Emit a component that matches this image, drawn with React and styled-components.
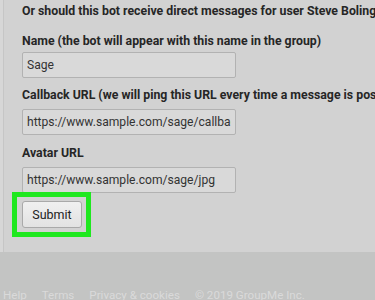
import React from 'react';
import styled, { createGlobalStyle } from 'styled-components';

const GlobalStyle = createGlobalStyle`
  html, body {
    margin: 0;
    padding: 0;
    background: #c3c4c3;
    overflow: hidden;
  }
  body {
    font-family: Roboto, "Liberation Sans", Arial, sans-serif;
  }
`;

const Panel = styled.div`
  background: #d2d2d2;
  border-left: 3px solid #d7d7d7;
  box-shadow: inset 1px 0 0 #c6c6c6;
  padding: 2.5px 0 17px 19px;
  height: 252px;
  box-sizing: border-box;
  overflow: hidden;
`;

const Label = styled.div`
  font-size: 12.3px;
  line-height: 16px;
  font-weight: 700;
  color: #262626;
  white-space: nowrap;
  margin-top: ${p => p.$top || 0}px;
  margin-bottom: ${p => p.$bottom || 6}px;
`;

const TextInput = styled.input`
  display: block;
  box-sizing: border-box;
  width: 214px;
  height: 26px;
  margin: 0;
  padding: 0 4px;
  border: 1px solid #b2b2b2;
  border-radius: 2px;
  background: #d9d9d9;
  font-family: inherit;
  font-size: 12.1px;
  color: #333;
  outline: none;
`;

const Highlight = styled.div`
  display: inline-block;
  margin: -1px 0 0 -10px;
  border: 5px solid #1fe81f;
  padding: 4px 4px 4px 5px;
`;

const SubmitButton = styled.button`
  display: block;
  box-sizing: border-box;
  width: 60px;
  height: 27px;
  margin: 0;
  padding: 0;
  border: 1px solid #a9a9a9;
  border-radius: 3px;
  background: linear-gradient(#f0f0f0, #e2e2e2);
  font-family: inherit;
  font-size: 12.5px;
  color: #222;
`;

const Footer = styled.div`
  display: flex;
  gap: 15px;
  padding: 36px 0 0 3px;
  font-size: 11.6px;
  color: #dadada;
  white-space: nowrap;
`;

const fields = [
  { label: 'Name (the bot will appear with this name in the group)', value: 'Sage', top: 14, bottom: 3.5 },
  { label: 'Callback URL (we will ping this URL every time a message is posted)', value: 'https://www.sample.com/sage/callback', top: 8.5, bottom: 6.5 },
  { label: 'Avatar URL', value: 'https://www.sample.com/sage/jpg', top: 9.5, bottom: 6.5 },
];

export default function App() {
  return (
    <>
      <GlobalStyle />
      <Panel>
        <Label $bottom={0}>Or should this bot receive direct messages for user Steve Bolinger?</Label>
        {fields.map(f => (
          <React.Fragment key={f.label}>
            <Label $top={f.top} $bottom={f.bottom}>{f.label}</Label>
            <TextInput defaultValue={f.value} />
          </React.Fragment>
        ))}
        <Highlight>
          <SubmitButton>Submit</SubmitButton>
        </Highlight>
      </Panel>
      <Footer>
        <span>Help</span>
        <span>Terms</span>
        <span>Privacy &amp; cookies</span>
        <span>© 2019 GroupMe Inc.</span>
      </Footer>
    </>
  );
}
